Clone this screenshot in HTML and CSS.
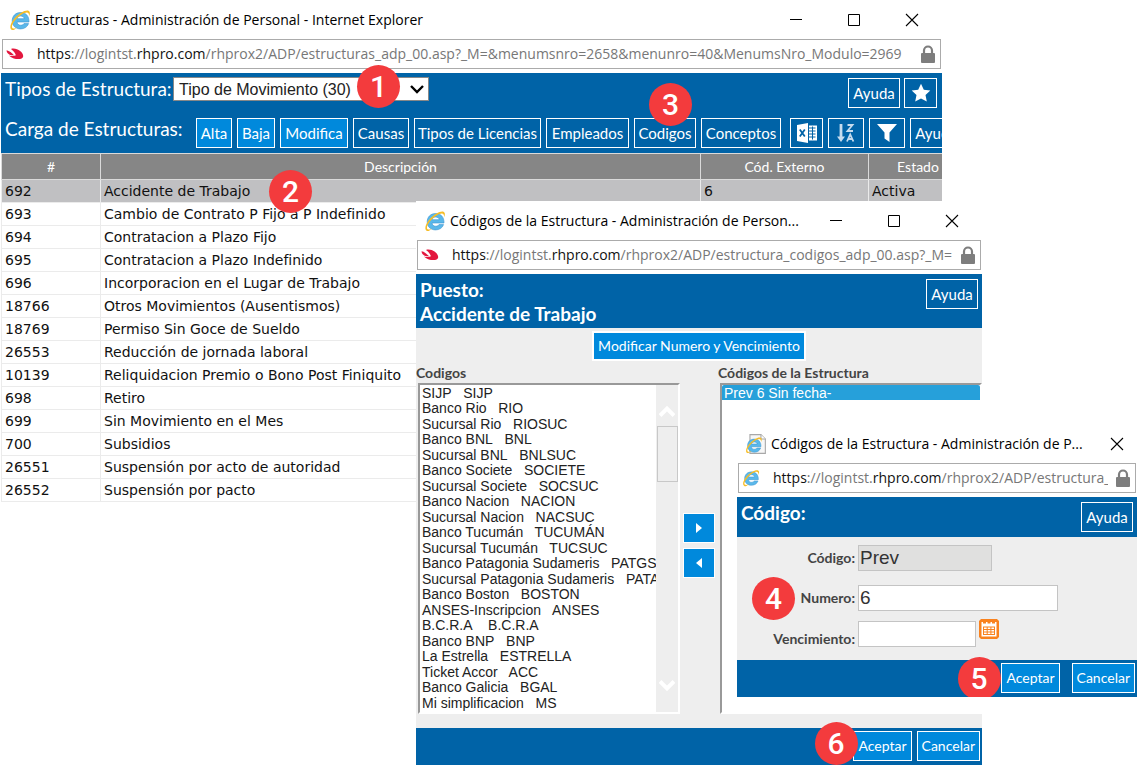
FILE: index.html
```html
<!DOCTYPE html>
<html lang="es">
<head>
<meta charset="utf-8">
<title>Estructuras - Administración de Personal</title>
<link rel="stylesheet" href="styles.css">
</head>
<body>
<svg class="defs" aria-hidden="true">
  <symbol id="ie" viewBox="0 0 22 22">
    <path d="M20 13H8c.2 2 1.700 3.200 3.700 3.200 1.500 0 2.600-.5 3.300-1.600h4.600c-1.200 3.400-4.200 5.300-8 5.300-5 0-8.400-3.200-8.400-8.100 0-4.900 3.500-8.300 8.500-8.300 5.200 0 8.500 3.700 8.300 9.500zM15.200 9.700c-.2-1.700-1.600-2.700-3.500-2.700-1.900 0-3.200 1-3.600 2.700z" fill="#5ab8ea" stroke="#3a94d0" stroke-width=".6"/>
    <path d="M3.200 21C.1 20 1 14.500 5.600 9.300 10.300 4 17 .4 19.800 1.900c1.400.8 1.400 2.700.4 5.300C20.200 4.800 19.400 3.500 17.800 3.500c-2.700 0-7.300 2.900-10.800 6.800-3.600 4-5.300 8.500-2.900 9.100 1.200.3 2.700-.3 4.200-1.200-1.900 1.800-3.700 3.200-5.100 2.800z" fill="#f6bd27"/>
  </symbol>
  <symbol id="ie-page" viewBox="0 0 20 20">
    <path d="M4.500 1.500h10l4 4v13h-14z" fill="#f7f7f7" stroke="#a8a8a8"/>
    <path d="M14.500 1.500v4h4" fill="#fff" stroke="#a8a8a8"/>
    <svg x="0" y="3" width="16" height="16"><use href="#ie"/></svg>
  </symbol>
  <symbol id="brand" viewBox="0 0 18 12">
    <path d="M.6 2.200C.4 5.200 4 8 8 7.200 5.800 5 3.300 2.600.6 2.200z" fill="#e3173e"/>
    <path d="M5 .9C11-.6 17 4.200 17.200 8c.2 3.300-5.600 3.700-9.400 2.400C5.600 9.600 3.900 8.600 3 7.600c2.500.8 5.300.6 6.900-.3C9.400 5 7.300 2.600 5 .9z" fill="#e3173e"/>
  </symbol>
  <symbol id="lock" viewBox="0 0 14 18">
    <path d="M3 9V5.500a4 4 0 0 1 8 0V9" fill="none" stroke="#7d7d7d" stroke-width="2.200"/>
    <rect x="0" y="8" width="14" height="10" rx="1" fill="#7d7d7d"/>
  </symbol>
  <symbol id="min" viewBox="0 0 14 14"><path d="M1 6.500h12" stroke="#000"/></symbol>
  <symbol id="max" viewBox="0 0 14 14"><path d="M1.500 1.500h11v11h-11z" fill="none" stroke="#000"/></symbol>
  <symbol id="close" viewBox="0 0 14 14"><path d="M1 1l12 12M13 1L1 13" stroke="#000" stroke-width="1.100"/></symbol>
</svg>

<main class="desktop">

  <section class="window window-main" aria-label="Estructuras">
    <header class="titlebar">
      <svg class="app-icon"><use href="#ie"/></svg>
      <h1 class="title">Estructuras - Administración de Personal - Internet Explorer</h1>
      <button class="ctl" aria-label="Minimizar"><svg><use href="#min"/></svg></button>
      <button class="ctl" aria-label="Maximizar"><svg><use href="#max"/></svg></button>
      <button class="ctl" aria-label="Cerrar"><svg><use href="#close"/></svg></button>
    </header>
    <div class="address">
      <svg class="brand"><use href="#brand"/></svg>
      <span class="url"><b>https</b>://logintst.<b>rhpro.com</b>/rhprox2/ADP/estructuras_adp_00.asp?_M=&amp;menumsnro=2658&amp;menunro=40&amp;MenumsNro_Modulo=2969</span>
      <svg class="lock"><use href="#lock"/></svg>
    </div>
    <div class="page">
      <div class="toolbar">
        <div class="bar-row">
          <label class="bar-label" for="tipo">Tipos de Estructura:</label>
          <div class="select-wrap">
            <select id="tipo" class="type-select"><option>Tipo de Movimiento (30)</option></select>
            <svg class="chevron" viewBox="0 0 14 10"><path d="M1 2l6 6 6-6" fill="none" stroke="#000" stroke-width="2.400"/></svg>
            <span class="badge badge-1">1</span>
          </div>
          <span class="spacer"></span>
          <button class="btn btn-help">Ayuda</button>
          <button class="btn btn-star" aria-label="Favorito"><svg width="20" height="20" viewBox="0 0 20 20"><path d="M10 .8l2.800 6 6.500.8-4.800 4.500 1.300 6.500L10 15.400l-5.800 3.200 1.300-6.500L.7 7.600l6.500-.8z" fill="#fff"/></svg></button>
        </div>
        <div class="bar-row bar-actions">
          <span class="bar-label">Carga de Estructuras:</span>
          <div class="actions">
            <button class="btn btn-bright">Alta</button>
            <button class="btn btn-bright">Baja</button>
            <button class="btn btn-bright">Modifica</button>
            <button class="btn">Causas</button>
            <button class="btn">Tipos de Licencias</button>
            <button class="btn">Empleados</button>
            <div class="anchor"><button class="btn btn-fill">Codigos</button><span class="badge badge-3">3</span></div>
            <button class="btn">Conceptos</button>
            <button class="btn btn-icon-first" aria-label="Excel"><svg width="20" height="20" viewBox="0 0 20 20"><path d="M0 2l11-2v20L0 18z" fill="#fff"/><path d="M2.800 6.500l5 7M7.800 6.500l-5 7" stroke="#0063a7" stroke-width="1.800"/><path d="M12 2.500h8v15h-8z" fill="#fff"/><path d="M12 5h6.500M12 8h6.500M12 11h6.500M12 14h6.500M15.500 3.500v13" stroke="#0063a7"/></svg></button>
            <button class="btn" aria-label="Ordenar"><svg width="18" height="20" viewBox="0 0 18 20" fill="none" stroke="#c6dcee" stroke-width="2"><path d="M4 1v15" stroke-width="2.800"/><path d="M0 13.500L4 19l4-5.500z" fill="#c6dcee" stroke="none"/><path d="M10.500 2h5l-5 6h5.500" stroke-width="1.800"/><path d="M10 18.500l3.200-7 3.200 7M11 16h4.500" stroke-width="1.800"/></svg></button>
            <button class="btn" aria-label="Filtrar"><svg width="20" height="20" viewBox="0 0 20 20"><path d="M0 1h20l-7.500 8.500V19l-5-3.500v-6z" fill="#fff"/></svg></button>
            <button class="btn btn-last">Ayuda</button>
          </div>
        </div>
      </div>
      <table class="grid">
        <thead><tr><th class="c-id">#</th><th>Descripción</th><th class="c-ext">Cód. Externo</th><th class="c-state">Estado</th></tr></thead>
        <tbody>
          <tr class="selected"><td>692</td><td><span class="anchor">Accidente de Trabajo<span class="badge badge-2">2</span></span></td><td>6</td><td>Activa</td></tr>
          <tr><td>693</td><td>Cambio de Contrato P Fijo a P Indefinido</td><td></td><td></td></tr>
          <tr><td>694</td><td>Contratacion a Plazo Fijo</td><td></td><td></td></tr>
          <tr><td>695</td><td>Contratacion a Plazo Indefinido</td><td></td><td></td></tr>
          <tr><td>696</td><td>Incorporacion en el Lugar de Trabajo</td><td></td><td></td></tr>
          <tr><td>18766</td><td>Otros Movimientos (Ausentismos)</td><td></td><td></td></tr>
          <tr><td>18769</td><td>Permiso Sin Goce de Sueldo</td><td></td><td></td></tr>
          <tr><td>26553</td><td>Reducción de jornada laboral</td><td></td><td></td></tr>
          <tr><td>10139</td><td>Reliquidacion Premio o Bono Post Finiquito</td><td></td><td></td></tr>
          <tr><td>698</td><td>Retiro</td><td></td><td></td></tr>
          <tr><td>699</td><td>Sin Movimiento en el Mes</td><td></td><td></td></tr>
          <tr><td>700</td><td>Subsidios</td><td></td><td></td></tr>
          <tr><td>26551</td><td>Suspensión por acto de autoridad</td><td></td><td></td></tr>
          <tr><td>26552</td><td>Suspensión por pacto</td><td></td><td></td></tr>
        </tbody>
      </table>
    </div>
  </section>

  <section class="window window-codes" aria-label="Códigos de la Estructura">
    <header class="titlebar">
      <svg class="app-icon"><use href="#ie"/></svg>
      <h2 class="title">Códigos de la Estructura - Administración de Person...</h2>
      <button class="ctl" aria-label="Minimizar"><svg><use href="#min"/></svg></button>
      <button class="ctl" aria-label="Maximizar"><svg><use href="#max"/></svg></button>
      <button class="ctl" aria-label="Cerrar"><svg><use href="#close"/></svg></button>
    </header>
    <div class="address">
      <svg class="brand"><use href="#brand"/></svg>
      <span class="url"><b>https</b>://logintst.<b>rhpro.com</b>/rhprox2/ADP/estructura_codigos_adp_00.asp?_M=</span>
      <svg class="lock"><use href="#lock"/></svg>
    </div>
    <div class="page">
      <div class="heading">
        <h3 class="heading-text">Puesto:<br>Accidente de Trabajo</h3>
        <button class="btn btn-help">Ayuda</button>
      </div>
      <div class="codes-body">
        <button class="btn btn-bright btn-soft btn-edit">Modificar Numero y Vencimiento</button>
        <div class="picker">
          <div class="pick-col">
            <label class="field-label" for="codigos">Codigos</label>
            <div class="listbox">
              <select id="codigos" class="list" size="21">
                <option>SIJP&nbsp;&nbsp; SIJP</option>
                <option>Banco Rio&nbsp;&nbsp; RIO</option>
                <option>Sucursal Rio&nbsp;&nbsp; RIOSUC</option>
                <option>Banco BNL&nbsp;&nbsp; BNL</option>
                <option>Sucursal BNL&nbsp;&nbsp; BNLSUC</option>
                <option>Banco Societe&nbsp;&nbsp; SOCIETE</option>
                <option>Sucursal Societe&nbsp;&nbsp; SOCSUC</option>
                <option>Banco Nacion&nbsp;&nbsp; NACION</option>
                <option>Sucursal Nacion&nbsp;&nbsp; NACSUC</option>
                <option>Banco Tucumán&nbsp;&nbsp; TUCUMÁN</option>
                <option>Sucursal Tucumán&nbsp;&nbsp; TUCSUC</option>
                <option>Banco Patagonia Sudameris&nbsp;&nbsp; PATGSU</option>
                <option>Sucursal Patagonia Sudameris&nbsp;&nbsp; PATA</option>
                <option>Banco Boston&nbsp;&nbsp; BOSTON</option>
                <option>ANSES-Inscripcion&nbsp;&nbsp; ANSES</option>
                <option>B.C.R.A&nbsp;&nbsp;&nbsp; B.C.R.A</option>
                <option>Banco BNP&nbsp;&nbsp; BNP</option>
                <option>La Estrella&nbsp;&nbsp; ESTRELLA</option>
                <option>Ticket Accor&nbsp;&nbsp; ACC</option>
                <option>Banco Galicia&nbsp;&nbsp; BGAL</option>
                <option>Mi simplificacion&nbsp;&nbsp; MS</option>
              </select>
              <div class="scroll" aria-hidden="true">
                <svg width="16" height="14" viewBox="0 0 16 14"><path d="M1 10.500l7-7 7 7" fill="none" stroke="#fff" stroke-width="4"/></svg>
                <span class="thumb"></span>
                <svg width="16" height="14" viewBox="0 0 16 14"><path d="M1 3.500l7 7 7-7" fill="none" stroke="#fff" stroke-width="4"/></svg>
              </div>
            </div>
          </div>
          <div class="movers">
            <button class="btn btn-bright btn-soft" aria-label="Agregar"><svg width="8" height="10" viewBox="0 0 8 10"><path d="M1 0l6 5-6 5z" fill="#fff"/></svg></button>
            <button class="btn btn-bright btn-soft" aria-label="Quitar"><svg width="8" height="10" viewBox="0 0 8 10"><path d="M7 0L1 5l6 5z" fill="#fff"/></svg></button>
          </div>
          <div class="pick-col">
            <label class="field-label" for="asignados">Códigos de la Estructura</label>
            <div class="listbox">
              <select id="asignados" class="list" size="21"><option class="picked">Prev 6 Sin fecha-</option></select>
            </div>
          </div>
        </div>
      </div>
      <div class="footer">
        <div class="anchor"><button class="btn btn-bright">Aceptar</button><span class="badge badge-6">6</span></div>
        <button class="btn btn-bright">Cancelar</button>
      </div>
    </div>
  </section>

  <section class="window window-code" aria-label="Código">
    <header class="titlebar">
      <svg class="app-icon"><use href="#ie-page"/></svg>
      <h2 class="title">Códigos de la Estructura - Administración de P...</h2>
      <button class="ctl" aria-label="Cerrar"><svg><use href="#close"/></svg></button>
    </header>
    <div class="address">
      <svg class="brand brand-ie"><use href="#ie"/></svg>
      <span class="url"><b>https</b>://logintst.<b>rhpro.com</b>/rhprox2/ADP/estructura_</span>
      <svg class="lock"><use href="#lock"/></svg>
    </div>
    <div class="page">
      <div class="heading heading-short">
        <h3 class="heading-text">Código:</h3>
        <button class="btn btn-help">Ayuda</button>
      </div>
      <form class="form">
        <div class="form-row">
          <label class="field-label" for="codigo">Código:</label>
          <input id="codigo" class="field field-code" value="Prev" readonly>
        </div>
        <div class="form-row">
          <label class="field-label" for="numero">Numero:</label>
          <input id="numero" class="field field-number" value="6">
          <span class="badge badge-4">4</span>
        </div>
        <div class="form-row form-row-date">
          <label class="field-label" for="venc">Vencimiento:</label>
          <input id="venc" class="field field-date">
          <button type="button" class="calendar" aria-label="Calendario"><svg width="20" height="20" viewBox="0 0 20 20"><path d="M2 0h16l2 2v16l-2 2H2l-2-2V2z" fill="#f9821e"/><path d="M2.500 3H4v1.500h3V3h1.500v1.500h3V3H13v1.500h3V3h1.500v14.500h-15z" fill="#fff"/><path d="M4 7.500h12v8.500H4z" fill="#f9821e"/><path d="M5 8.500h2.700v1.500H5zM8.700 8.500h2.700v1.500H8.700zM12.400 8.500H15v1.500h-2.600zM5 11h2.700v1.500H5zM8.700 11h2.700v1.500H8.700zM12.400 11H15v1.500h-2.600zM5 13.500h2.700V15H5zM8.700 13.500h2.700V15H8.700zM12.400 13.500H15V15h-2.600z" fill="#fff"/></svg></button>
        </div>
      </form>
      <div class="footer footer-wide">
        <div class="anchor"><button class="btn btn-bright">Aceptar</button><span class="badge badge-5">5</span></div>
        <button class="btn btn-bright">Cancelar</button>
      </div>
    </div>
  </section>

</main>
</body>
</html>
```

FILE: styles.css
```css
* { box-sizing: border-box; }

body {
  margin: 0;
  background: #fff;
  font-family: "Open Sans", "Noto Sans", sans-serif;
}

.defs { position: absolute; width: 0; height: 0; }

h1, h2, h3 { margin: 0; font-weight: 400; }

.desktop { position: relative; min-height: 100vh; overflow: hidden; }

/* Windows */
.window { position: absolute; background: #fff; overflow: hidden; }
.window-main { left: 0; right: 196px; top: 0; padding-left: 1px; }
.window-codes { left: 416px; right: 156px; top: 201px; }
.window-code { left: 737px; right: 1px; top: 424px; }

.titlebar {
  display: flex;
  align-items: center;
  height: 39px;
  padding: 0 7px 0 8px;
}
.app-icon { width: 22px; height: 22px; margin-right: 4px; flex: none; }
.title {
  flex: 1;
  min-width: 0;
  overflow: hidden;
  white-space: nowrap;
  font-size: 14px;
  line-height: 20px;
}
.ctl {
  display: flex;
  align-items: center;
  justify-content: center;
  width: 46px;
  height: 30px;
  margin-left: 12px;
  padding: 0;
  border: 0;
  background: none;
}
.ctl svg { width: 14px; height: 14px; }
.window-code .titlebar { padding-right: 5px; }
.window-code .ctl { width: 30px; }

.address {
  display: flex;
  align-items: center;
  height: 30px;
  margin: 0 1px 4px;
  padding: 0 5px 0 3px;
  border: 1px solid #ababab;
}
.brand { width: 18px; height: 12px; margin-right: 13px; flex: none; }
.brand-ie { height: 18px; }
.url {
  flex: 1;
  min-width: 0;
  overflow: hidden;
  white-space: nowrap;
  color: #777;
  font-size: 14px;
  line-height: 24px;
}
.url b { font-weight: 400; color: #111; }
.lock { width: 14px; height: 18px; margin-left: 8px; flex: none; }

/* Buttons */
.btn {
  display: flex;
  align-items: center;
  justify-content: center;
  height: 30px;
  padding: 0 4px;
  border: 1px solid #fff;
  background: #0063a7;
  color: #fff;
  font-family: Lato, "Open Sans", sans-serif;
  font-size: 14px;
  line-height: 20px;
  white-space: nowrap;
}
.btn-bright { background: #0089dc; }
.btn-fill { width: 100%; }
.btn-help { width: 52px; font-size: 15px; }
.btn-star { width: 33px; margin-left: 4px; padding: 0; }
.btn-soft { border: 2px solid #fff; }

.anchor { position: relative; }

/* Step markers */
.badge {
  position: absolute;
  z-index: 2;
  width: 43px;
  height: 43px;
  border-radius: 50%;
  background: #f33b3d;
  color: #fff;
  font-family: Roboto, sans-serif;
  font-weight: 500;
  font-size: 30px;
  line-height: 43px;
  text-align: center;
}
.badge-1 { right: 29px; top: -12px; }
.badge-2 { left: 165px; top: -13px; }
.badge-3 { left: 15px; bottom: 22px; }
.badge-4 { left: 15px; top: -8px; }
.badge-5 { right: 59px; bottom: -6px; }
.badge-6 { right: 54px; bottom: -3px; }

/* Structure types window */
.toolbar {
  height: 80px;
  background: #0063a7;
  overflow: visible;
}
.bar-row {
  display: flex;
  align-items: flex-start;
  height: 40px;
  padding: 4px 5px 0 4px;
}
.bar-actions { padding-right: 0; overflow: visible; }
.bar-label {
  color: #fff;
  font-family: Lato, "Open Sans", sans-serif;
  font-size: 19px;
  line-height: 24px;
  white-space: nowrap;
  width: 168px;
  flex: none;
}
.bar-actions .bar-label { width: 191px; }
.bar-row .btn { margin-top: 1px; }
.spacer { flex: 1; }
.select-wrap { position: relative; width: 256px; height: 24px; }
.type-select {
  appearance: none;
  width: 100%;
  height: 24px;
  padding: 0 5px;
  border: 1px solid #888;
  border-radius: 0;
  background: #fff;
  color: #222;
  font-family: "Liberation Sans", Arial, sans-serif;
  font-size: 16px;
}
.chevron { position: absolute; right: 5px; top: 7px; width: 14px; height: 10px; pointer-events: none; }
.actions {
  display: grid;
  grid-template-columns: 36px 38px 68px 56px 127px 83px 62px 80px 37px 36px 36px 52px;
  column-gap: 5px;
  flex: none;
}
.actions .btn { padding: 0; font-size: 15px; }
.actions .btn-icon-first { margin-left: 4px; }

.grid {
  width: calc(100% + 25px);
  border-collapse: separate;
  border-spacing: 0;
  table-layout: fixed;
  font-family: "DejaVu Sans", sans-serif;
  font-size: 14px;
  color: #111;
}
.grid th {
  height: 27px;
  padding: 0;
  border: solid #dadada;
  border-width: 1px 0 1px 1px;
  background: #868686;
  color: #fff;
  font-family: Lato, "Open Sans", sans-serif;
  font-size: 14px;
  font-weight: 400;
}
.grid td {
  height: 23px;
  padding: 0 0 0 3px;
  border: solid #ebebeb;
  border-width: 0 0 1px 1px;
  line-height: 20px;
  white-space: nowrap;
}
.grid .selected td { background: #c0c0c2; }
.c-id { width: 99px; }
.c-ext { width: 168px; }
.c-state { width: 99px; }

/* Secondary window headings */
.heading {
  display: flex;
  justify-content: space-between;
  align-items: flex-start;
  min-height: 54px;
  padding: 4px 4px 0;
  background: #0063a7;
}
.heading .btn { margin-top: 1px; }
.heading-short { min-height: 40px; }
.heading-text {
  color: #fff;
  font-family: Lato, "Open Sans", sans-serif;
  font-size: 19px;
  font-weight: 700;
  line-height: 24px;
}

.field-label {
  color: #444;
  font-family: Lato, "Open Sans", sans-serif;
  font-size: 14px;
  font-weight: 700;
  line-height: 20px;
}

/* Code picker */
.codes-body {
  display: flex;
  flex-direction: column;
  height: 400px;
  padding-top: 3px;
  background: #eee;
}
.btn-edit { align-self: center; width: 214px; padding: 0; }
.picker { display: grid; grid-template-columns: 264px 1fr 264px; margin-top: 2px; }
.pick-col { display: flex; flex-direction: column; }
.listbox {
  display: flex;
  height: 331px;
  margin-left: 2px;
  border: 2px solid #fff;
  border-top-color: #999;
  border-left-color: #999;
  background: #fff;
}
.list {
  flex: 1;
  min-width: 0;
  height: 327px;
  padding: 0;
  border: 0;
  outline: 0;
  background: #fff;
  color: #222;
  font-family: "Liberation Sans", Arial, sans-serif;
  font-size: 14px;
  overflow: hidden;
  scrollbar-width: none;
}
.list option { min-height: 0; height: 15px; padding: 0 2px; line-height: 15px; }
.list option:nth-child(even) { height: 16px; line-height: 16px; }
.list .picked { background: #26a0da; color: #fff; }
.scroll {
  display: flex;
  flex-direction: column;
  align-items: center;
  width: 22px;
  padding: 20px 0 20px;
  background: #eee;
}
.thumb { width: 21px; height: 56px; margin: 7px 0 auto; border: 1px solid #c8c8c8; }
.movers {
  display: flex;
  flex-direction: column;
  align-items: center;
  gap: 5px;
  padding-top: 150px;
}
.movers .btn { width: 32px; border-width: 1px; }

.footer {
  display: flex;
  justify-content: flex-end;
  gap: 5px;
  height: 37px;
  padding: 3px 2px;
  background: #0063a7;
}
.footer-wide { gap: 12px; }

/* Code form */
.form { padding: 8px 0 11px; background: #eee; }
.form-row {
  position: relative;
  display: grid;
  grid-template-columns: 118px auto auto;
  justify-content: start;
  column-gap: 3px;
  align-items: center;
  margin-bottom: 14px;
}
.form-row .field-label { text-align: right; }
.form-row-date { height: 30px; margin: -6px 0 0; }
.form-row-date .field-label { align-self: end; }
.field {
  height: 26px;
  padding: 0 1px;
  border: 1px solid #c4c4c4;
  background: #fff;
  color: #333;
  font-family: "Liberation Sans", Arial, sans-serif;
  font-size: 19px;
  line-height: 20px;
}
.field-code { width: 134px; background: #e0e0df; }
.field-number { width: 200px; }
.field-date { width: 118px; }
.calendar { align-self: start; display: flex; padding: 0; border: 0; background: none; }
```
